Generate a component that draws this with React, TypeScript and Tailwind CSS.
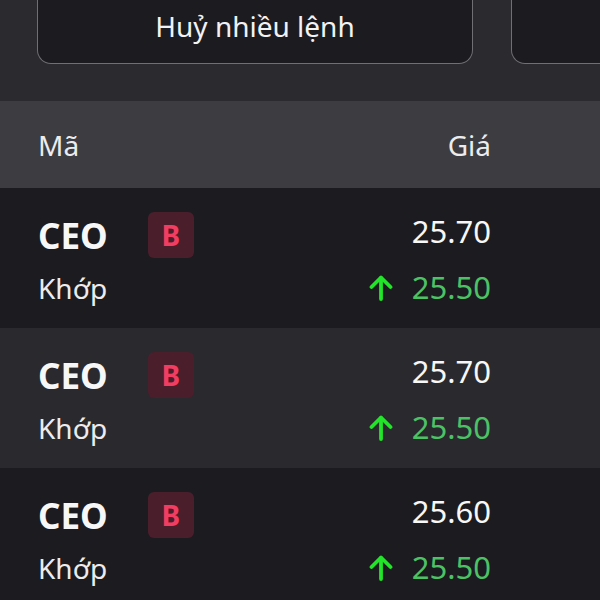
const orders = [
  { code: "CEO", side: "B", price: "25.70", match: "25.50" },
  { code: "CEO", side: "B", price: "25.70", match: "25.50" },
  { code: "CEO", side: "B", price: "25.60", match: "25.50" },
];

function UpArrow() {
  return (
    <svg width="24" height="26" viewBox="0 0 24 26" fill="none" stroke="#22e52a" strokeWidth="3.8" strokeLinecap="round" strokeLinejoin="round">
      <path d="M2.5 12 L12 2.5 L21.5 12" />
      <path d="M12 3 V24" />
    </svg>
  );
}

export default function App() {
  return (
    <div className="w-[600px] h-[600px] overflow-hidden bg-[#1c1b1f] text-white" style={{ fontFamily: "'Noto Sans', sans-serif" }}>
      {/* Top actions */}
      <div className="h-[101px] bg-[#2b2a2f] flex gap-[38px] pl-[37px]">
        <div className="w-[436px] h-[64px] shrink-0 border-[1.5px] border-t-0 border-[#706f74] rounded-b-[14px] bg-[#1c1b20] flex justify-center pt-[11px]">
          <span className="text-[28px] leading-[30px] text-[#f2f2f4]">Huỷ nhiều lệnh</span>
        </div>
        <div className="w-[200px] h-[64px] shrink-0 border-[1.5px] border-t-0 border-[#706f74] rounded-b-[14px] bg-[#1c1b20]" />
      </div>

      {/* Header */}
      <div className="h-[87px] bg-[#3d3c40] flex items-center justify-between pl-[38px] pr-[109px] text-[28px] text-[#ececee]">
        <span>Mã</span>
        <span>Giá</span>
      </div>

      {/* Rows */}
      {orders.map((o, i) => (
        <div key={i} className={`h-[140px] flex justify-between pl-[38px] pr-[109px] ${i % 2 === 1 ? "bg-[#2a292e]" : "bg-[#1c1b1f]"}`}>
          <div className="pt-[24px]">
            <div className="h-[46px] flex items-center gap-[40px]">
              <span className="text-[35px] font-bold leading-none text-[#f7f7f7]">{o.code}</span>
              <span className="w-[46px] h-[46px] rounded-[6px] bg-[#4b1e2c] flex items-center justify-center text-[28px] font-bold leading-none text-[#f23d62]">
                {o.side}
              </span>
            </div>
            <div className="mt-[16px] text-[28px] leading-[28px] text-[#ececee]">Khớp</div>
          </div>
          <div className="pt-[28px] flex flex-col items-end">
            <div className="text-[31px] leading-[31px] text-[#f7f7f7]">{o.price}</div>
            <div className="mt-[25px] flex items-center gap-[19px]">
              <UpArrow />
              <span className="text-[31px] leading-[31px] text-[#4cc266]">{o.match}</span>
            </div>
          </div>
        </div>
      ))}
    </div>
  );
}
